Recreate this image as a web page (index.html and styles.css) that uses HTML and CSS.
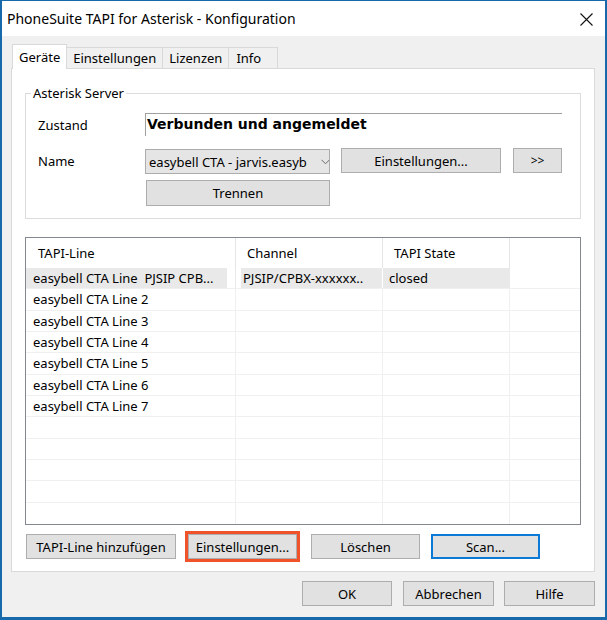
FILE: index.html
```html
<!DOCTYPE html>
<html lang="de">
<head>
<meta charset="utf-8">
<title>PhoneSuite TAPI for Asterisk - Konfiguration</title>
<link rel="stylesheet" href="styles.css">
</head>
<body>
<div class="window">
  <div class="titlebar">
    <span class="title">PhoneSuite TAPI for Asterisk - Konfiguration</span>
    <svg class="close" width="13" height="13" viewBox="0 0 13 13"><path d="M0.5 0.5L12.5 12.5M12.5 0.5L0.5 12.5" stroke="#111" stroke-width="1.1" fill="none"/></svg>
  </div>
  <div class="client">
    <div class="tabs">
      <div class="tab active">Geräte</div>
      <div class="tab">Einstellungen</div>
      <div class="tab">Lizenzen</div>
      <div class="tab tab-info">Info</div>
    </div>
    <div class="panel">
      <fieldset class="group">
        <legend>Asterisk Server</legend>
        <div class="grow grow-state">
          <span class="label">Zustand</span>
          <div class="status">Verbunden und angemeldet</div>
        </div>
        <div class="grow grow-name">
          <span class="label">Name</span>
          <div class="combo">
            <span class="combo-text">easybell CTA - jarvis.easyb</span>
            <svg class="chev" width="9" height="6" viewBox="0 0 9 6"><path d="M0.5 0.8L4.5 4.8L8.5 0.8" stroke="#6a6a6a" stroke-width="1" fill="none"/></svg>
          </div>
          <button class="btn btn-settings">Einstellungen...</button>
          <button class="btn btn-more">&gt;&gt;</button>
        </div>
        <div class="grow grow-disc">
          <button class="btn btn-disc">Trennen</button>
        </div>
      </fieldset>

      <div class="listview">
        <div class="lv-head">
          <div class="hc">TAPI-Line</div>
          <div class="hc">Channel</div>
          <div class="hc">TAPI State</div>
          <div class="hc hc-last"></div>
        </div>
        <div class="lv-body">
          <div class="lrow sel"><div class="c c1">easybell CTA Line  PJSIP CPB...</div><div class="c c2">PJSIP/CPBX-xxxxxx..</div><div class="c c3">closed</div><div class="c c4"></div></div>
          <div class="lrow"><div class="c c1">easybell CTA Line 2</div><div class="c c2"></div><div class="c c3"></div><div class="c c4"></div></div>
          <div class="lrow"><div class="c c1">easybell CTA Line 3</div><div class="c c2"></div><div class="c c3"></div><div class="c c4"></div></div>
          <div class="lrow"><div class="c c1">easybell CTA Line 4</div><div class="c c2"></div><div class="c c3"></div><div class="c c4"></div></div>
          <div class="lrow"><div class="c c1">easybell CTA Line 5</div><div class="c c2"></div><div class="c c3"></div><div class="c c4"></div></div>
          <div class="lrow"><div class="c c1">easybell CTA Line 6</div><div class="c c2"></div><div class="c c3"></div><div class="c c4"></div></div>
          <div class="lrow"><div class="c c1">easybell CTA Line 7</div><div class="c c2"></div><div class="c c3"></div><div class="c c4"></div></div>
          <div class="lrow"><div class="c c1"></div><div class="c c2"></div><div class="c c3"></div><div class="c c4"></div></div>
          <div class="lrow"><div class="c c1"></div><div class="c c2"></div><div class="c c3"></div><div class="c c4"></div></div>
          <div class="lrow"><div class="c c1"></div><div class="c c2"></div><div class="c c3"></div><div class="c c4"></div></div>
          <div class="lrow"><div class="c c1"></div><div class="c c2"></div><div class="c c3"></div><div class="c c4"></div></div>
          <div class="lrow last"><div class="c c1"></div><div class="c c2"></div><div class="c c3"></div><div class="c c4"></div></div>
        </div>
      </div>

      <div class="actions">
        <button class="btn btn-add">TAPI-Line hinzufügen</button>
        <button class="btn btn-line highlight">Einstellungen...</button>
        <button class="btn btn-line btn-del">Löschen</button>
        <button class="btn btn-line btn-scan">Scan...</button>
      </div>
    </div>
    <div class="footer">
      <button class="btn btn-ok">OK</button>
      <button class="btn btn-foot">Abbrechen</button>
      <button class="btn btn-foot">Hilfe</button>
    </div>
  </div>
</div>
</body>
</html>
```

FILE: styles.css
```css
html, body {
  margin: 0;
  padding: 0;
}
body {
  width: 607px;
  height: 620px;
  overflow: hidden;
  font-family: "Noto Sans", "Open Sans", sans-serif;
  font-size: 13px;
  color: #000;
}
.window {
  width: 607px;
  height: 620px;
  box-sizing: border-box;
  border: 2px solid #1769ab;
  border-top-width: 1px;
  border-bottom-width: 3px;
  background: #f0f0f0;
  display: flex;
  flex-direction: column;
}
.titlebar {
  flex: none;
  height: 35px;
  background: #fff;
  display: flex;
  align-items: center;
  justify-content: space-between;
  padding: 0 12px 0 5px;
}
.title {
  font-size: 14px;
  line-height: 20px;
  color: #000;
}
.close {
  display: block;
  margin-top: 1px;
}
.client {
  flex: 1;
  display: flex;
  flex-direction: column;
  padding: 8px 10px 0 9px;
}
.tabs {
  display: flex;
  align-items: flex-end;
  height: 25px;
  margin-left: 1px;
  margin-bottom: -1px;
  position: relative;
  z-index: 1;
}
.tab {
  box-sizing: border-box;
  height: 22px;
  line-height: 20px;
  padding: 0 6px;
  border: 1px solid #d9d9d9;
  background: #f0f0f0;
  margin-left: -1px;
  white-space: nowrap;
}
.tab:first-child {
  margin-left: 0;
}
.tab.active {
  height: 25px;
  background: #fff;
  border-bottom: none;
  padding-top: 2px;
  line-height: 20px;
}
.tab-info {
  width: 50px;
  padding-left: 7px;
}
.panel {
  box-sizing: border-box;
  height: 504px;
  background: #fff;
  border: 1px solid #d9d9d9;
  padding: 0 13px;
}
.group {
  margin: 16px 0 0 0;
  border: 1px solid #dcdcdc;
  padding: 12px 12px 12px 12px;
  min-width: 0;
}
.group legend {
  padding: 0 2px;
  margin-left: -7px;
  line-height: 16px;
}
.grow {
  display: flex;
  align-items: center;
}
.label {
  width: 107px;
  flex: none;
}
.grow-state {
  height: 23px;
}
.grow-state .label {
  padding-top: 1px;
}
.status {
  box-sizing: border-box;
  width: 417px;
  height: 23px;
  border-top: 1px solid #a0a0a0;
  border-left: 1px solid #a0a0a0;
  padding-left: 1px;
  font-family: "DejaVu Sans", sans-serif;
  font-weight: bold;
  font-size: 14px;
  line-height: 21px;
  white-space: nowrap;
}
.grow-name {
  height: 26px;
  margin-top: 12px;
}
.combo {
  box-sizing: border-box;
  width: 185px;
  height: 25px;
  margin-top: 1px;
  background: #e5e5e5;
  border: 1px solid #acacac;
  display: flex;
  align-items: center;
  padding: 0 0 0 3px;
  overflow: hidden;
}
.combo-text {
  width: 170px;
  flex: none;
  overflow: hidden;
  white-space: nowrap;
}
.chev {
  display: block;
  margin-left: 2px;
  flex: none;
}
.btn {
  box-sizing: border-box;
  height: 25px;
  padding: 0;
  margin: 0;
  background: #e1e1e1;
  border: 1px solid #adadad;
  border-radius: 0;
  font-family: "Noto Sans", "Open Sans", sans-serif;
  font-size: 13px;
  color: #000;
  white-space: nowrap;
  flex: none;
}
.btn-settings {
  width: 160px;
  margin-left: 11px;
  margin-top: -1px;
}
.btn-more {
  width: 49px;
  margin-left: 12px;
  margin-top: -1px;
  font-size: 12px;
}
.grow-disc {
  margin-top: 6px;
}
.btn-disc {
  width: 184px;
  height: 26px;
  margin-left: 108px;
}
.listview {
  margin-top: 18px;
  box-sizing: border-box;
  height: 288px;
  border: 1px solid #828790;
  background: #fff;
}
.lv-head {
  display: grid;
  grid-template-columns: 210px 147px 127px 1fr;
  height: 30px;
}
.hc {
  box-sizing: border-box;
  border-right: 1px solid #e5e5e5;
  padding-left: 11px;
  line-height: 30px;
  white-space: nowrap;
}
.hc:first-child {
  padding-left: 12px;
}
.hc.hc-last {
  border-right: none;
}
.lv-body {
  height: 256px;
  overflow: hidden;
}
.lrow {
  display: grid;
  grid-template-columns: 210px 147px 127px 1fr;
  height: 21.333px;
  box-sizing: border-box;
  border-bottom: 1px solid #f0f0f0;
}
.lrow.last {
  border-bottom: none;
}
.c {
  box-sizing: border-box;
  border-right: 1px solid #f0f0f0;
  line-height: 20px;
  white-space: pre;
  overflow: hidden;
  padding-left: 7px;
}
.c4 {
  border-right: none;
}
.c2 {
  padding-left: 7px;
}
.c3 {
  padding-left: 6px;
}
.lrow.sel .c {
  border-right-color: transparent;
}
.lrow.sel .c1 {
  background: linear-gradient(to right, #e9e9e9 0, #e9e9e9 201px, #fff 201px);
}
.lrow.sel .c2 {
  background: linear-gradient(to right, #fff 0, #fff 5px, #e9e9e9 5px);
}
.lrow.sel .c3 {
  background: #e9e9e9;
}
.actions {
  display: flex;
  margin-top: 9px;
  margin-left: 1px;
}
.btn-add {
  width: 150px;
}
.btn-line {
  width: 109px;
}
.highlight {
  margin-left: 12px;
  outline: 3px solid #f0532a;
  outline-offset: 0;
}
.btn-del {
  margin-left: 14px;
}
.btn-scan {
  margin-left: 11px;
  border: 2px solid #0a7ad6;
}
.footer {
  display: flex;
  justify-content: flex-end;
  margin-top: 9px;
}
.btn-ok {
  width: 90px;
}
.btn-foot {
  width: 91px;
  margin-left: 11px;
}
.btn-foot:last-child {
  margin-left: 10px;
}
```
